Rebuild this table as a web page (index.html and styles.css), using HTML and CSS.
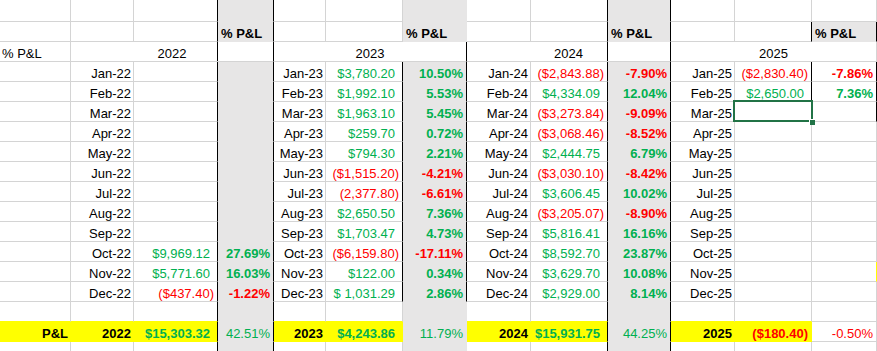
FILE: index.html
```html
<!DOCTYPE html>
<html>
<head>
<meta charset="utf-8">
<link rel="stylesheet" href="styles.css">
</head>
<body>
<div class="sheet">
  <!-- row 1 -->
  <div class="c"></div><div class="c"></div><div class="c k"></div><div class="c g k"></div>
  <div class="c"></div><div class="c"></div><div class="c g"></div>
  <div class="c"></div><div class="c k"></div><div class="c g k"></div>
  <div class="c"></div><div class="c"></div><div class="c"></div>
  <!-- row 2 -->
  <div class="c"></div><div class="c"></div><div class="c k"></div><div class="c g k l b">% P&amp;L</div>
  <div class="c"></div><div class="c"></div><div class="c g l b">% P&amp;L</div>
  <div class="c"></div><div class="c k"></div><div class="c g k l b">% P&amp;L</div>
  <div class="c"></div><div class="c k"></div><div class="c g k l b">% P&amp;L</div>
  <!-- row 3 -->
  <div class="c l">% P&amp;L</div>
  <div class="c s3 ctr k split146">2022</div>
  <div class="c s3 ctr k">2023</div>
  <div class="c s3 ctr k split140">2024</div>
  <div class="c s3 ctr">2025</div>
  <!-- Jan -->
  <div class="c"></div><div class="c mo">Jan-22</div><div class="c k"></div><div class="c g k"></div>
  <div class="c mo">Jan-23</div><div class="c k pos">$3,780.20</div><div class="c g k up">10.50%</div>
  <div class="c mo">Jan-24</div><div class="c k neg">($2,843.88)</div><div class="c g k dn">-7.90%</div>
  <div class="c mo">Jan-25</div><div class="c k neg">($2,830.40)</div><div class="c k dn">-7.86%</div>
  <!-- Feb -->
  <div class="c"></div><div class="c mo">Feb-22</div><div class="c k"></div><div class="c g k"></div>
  <div class="c mo">Feb-23</div><div class="c k pos">$1,992.10</div><div class="c g k up">5.53%</div>
  <div class="c mo">Feb-24</div><div class="c k pos">$4,334.09</div><div class="c g k up">12.04%</div>
  <div class="c mo">Feb-25</div><div class="c k pos">$2,650.00</div><div class="c k up">7.36%</div>
  <!-- Mar -->
  <div class="c"></div><div class="c mo">Mar-22</div><div class="c k"></div><div class="c g k"></div>
  <div class="c mo">Mar-23</div><div class="c k pos">$1,963.10</div><div class="c g k up">5.45%</div>
  <div class="c mo">Mar-24</div><div class="c k neg">($3,273.84)</div><div class="c g k dn">-9.09%</div>
  <div class="c mo">Mar-25</div><div class="c k sel"></div><div class="c k"></div>
  <!-- Apr -->
  <div class="c"></div><div class="c mo">Apr-22</div><div class="c k"></div><div class="c g k"></div>
  <div class="c mo">Apr-23</div><div class="c k pos">$259.70</div><div class="c g k up">0.72%</div>
  <div class="c mo">Apr-24</div><div class="c k neg">($3,068.46)</div><div class="c g k dn">-8.52%</div>
  <div class="c mo">Apr-25</div><div class="c"></div><div class="c"></div>
  <!-- May -->
  <div class="c"></div><div class="c mo">May-22</div><div class="c k"></div><div class="c g k"></div>
  <div class="c mo">May-23</div><div class="c k pos">$794.30</div><div class="c g k up">2.21%</div>
  <div class="c mo">May-24</div><div class="c k pos">$2,444.75</div><div class="c g k up">6.79%</div>
  <div class="c mo">May-25</div><div class="c"></div><div class="c"></div>
  <!-- Jun -->
  <div class="c"></div><div class="c mo">Jun-22</div><div class="c k"></div><div class="c g k"></div>
  <div class="c mo">Jun-23</div><div class="c k neg">($1,515.20)</div><div class="c g k dn">-4.21%</div>
  <div class="c mo">Jun-24</div><div class="c k neg">($3,030.10)</div><div class="c g k dn">-8.42%</div>
  <div class="c mo">Jun-25</div><div class="c"></div><div class="c"></div>
  <!-- Jul -->
  <div class="c"></div><div class="c mo">Jul-22</div><div class="c k"></div><div class="c g k"></div>
  <div class="c mo">Jul-23</div><div class="c k neg">(2,377.80)</div><div class="c g k dn">-6.61%</div>
  <div class="c mo">Jul-24</div><div class="c k pos">$3,606.45</div><div class="c g k up">10.02%</div>
  <div class="c mo">Jul-25</div><div class="c"></div><div class="c"></div>
  <!-- Aug -->
  <div class="c"></div><div class="c mo">Aug-22</div><div class="c k"></div><div class="c g k"></div>
  <div class="c mo">Aug-23</div><div class="c k pos">$2,650.50</div><div class="c g k up">7.36%</div>
  <div class="c mo">Aug-24</div><div class="c k neg">($3,205.07)</div><div class="c g k dn">-8.90%</div>
  <div class="c mo">Aug-25</div><div class="c"></div><div class="c"></div>
  <!-- Sep -->
  <div class="c"></div><div class="c mo">Sep-22</div><div class="c k"></div><div class="c g k"></div>
  <div class="c mo">Sep-23</div><div class="c k pos">$1,703.47</div><div class="c g k up">4.73%</div>
  <div class="c mo">Sep-24</div><div class="c k pos">$5,816.41</div><div class="c g k up">16.16%</div>
  <div class="c mo">Sep-25</div><div class="c"></div><div class="c"></div>
  <!-- Oct -->
  <div class="c"></div><div class="c mo">Oct-22</div><div class="c k pos">$9,969.12</div><div class="c g k up">27.69%</div>
  <div class="c mo">Oct-23</div><div class="c k neg">($6,159.80)</div><div class="c g k dn">-17.11%</div>
  <div class="c mo">Oct-24</div><div class="c k pos">$8,592.70</div><div class="c g k up">23.87%</div>
  <div class="c mo">Oct-25</div><div class="c"></div><div class="c"></div>
  <!-- Nov -->
  <div class="c"></div><div class="c mo">Nov-22</div><div class="c k pos">$5,771.60</div><div class="c g k up">16.03%</div>
  <div class="c mo">Nov-23</div><div class="c k pos">$122.00</div><div class="c g k up">0.34%</div>
  <div class="c mo">Nov-24</div><div class="c k pos">$3,629.70</div><div class="c g k up">10.08%</div>
  <div class="c mo">Nov-25</div><div class="c"></div><div class="c yr"></div>
  <!-- Dec -->
  <div class="c"></div><div class="c mo">Dec-22</div><div class="c k neg">($437.40)</div><div class="c g k dn">-1.22%</div>
  <div class="c mo">Dec-23</div><div class="c k pos">$ 1,031.29</div><div class="c g k up">2.86%</div>
  <div class="c mo">Dec-24</div><div class="c k pos">$2,929.00</div><div class="c g k up">8.14%</div>
  <div class="c mo">Dec-25</div><div class="c"></div><div class="c"></div>
  <!-- blank -->
  <div class="c yb"></div><div class="c yb"></div><div class="c k yb"></div><div class="c g k"></div>
  <div class="c yb"></div><div class="c yb"></div><div class="c g"></div>
  <div class="c yb"></div><div class="c k yb"></div><div class="c g k"></div>
  <div class="c yb"></div><div class="c yb"></div><div class="c"></div>
  <!-- totals -->
  <div class="c y b">P&amp;L</div><div class="c y b">2022</div><div class="c y k b pos">$15,303.32</div><div class="c g k tp">42.51%</div>
  <div class="c y b">2023</div><div class="c y b pos">$4,243.86</div><div class="c g tp">11.79%</div>
  <div class="c y b">2024</div><div class="c y k b pos">$15,931.75</div><div class="c g k tp">44.25%</div>
  <div class="c y b">2025</div><div class="c y b neg">($180.40)</div><div class="c tn">-0.50%</div>
  <!-- last -->
  <div class="c"></div><div class="c"></div><div class="c k"></div><div class="c g k"></div>
  <div class="c"></div><div class="c"></div><div class="c g"></div>
  <div class="c"></div><div class="c k"></div><div class="c g k"></div>
  <div class="c"></div><div class="c"></div><div class="c"></div>
</div>
</body>
</html>
```
FILE: styles.css
```css
html, body {
  margin: 0;
  padding: 0;
  background: #ffffff;
  overflow: hidden;
}

.sheet {
  display: grid;
  grid-template-columns: 71px 63px 84px 56px 52px 77px 64px 64px 77px 63px 64px 77px 65px;
  grid-template-rows: 22px repeat(17, 20px);
  font-family: "Liberation Sans", Arial, sans-serif;
  font-size: 13px;
  color: #000000;
}

.c {
  box-sizing: border-box;
  border-right: 1px solid #d4d4d4;
  border-bottom: 1px solid #d4d4d4;
  display: flex;
  align-items: flex-end;
  justify-content: flex-end;
  padding: 0 2px;
  line-height: 15px;
  white-space: nowrap;
  overflow: hidden;
}

.l { justify-content: flex-start; padding-left: 2px; }
.ctr { justify-content: center; }
.b { font-weight: bold; }
.s3 { grid-column: span 3; }

.g {
  background: #e7e6e6;
  border-right-color: #e7e6e6;
  border-bottom-color: #e7e6e6;
}
.g.l { padding-left: 3px; }

.y {
  background: #ffff00;
  border-right-color: #ffff00;
  border-bottom-color: #ffff00;
}

.yb { border-bottom-color: #ffff00; }
.yr { border-right-color: #ffff00; }

.k { border-right-color: #000000; }

.split146 {
  background: linear-gradient(to right, transparent 146px, #000000 146px, #000000 147px, transparent 147px);
}
.split140 {
  background: linear-gradient(to right, transparent 140px, #000000 140px, #000000 141px, transparent 141px);
}

.mo { padding-right: 2px; }

.pos { color: #00b050; padding-right: 7px; }
.neg { color: #ff0000; padding-right: 3px; }

.up { color: #00b050; font-weight: bold; padding-right: 3px; }
.dn { color: #ff0000; font-weight: bold; padding-right: 3px; }
.tp { color: #00b050; padding-right: 3px; }
.tn { color: #ff0000; padding-right: 3px; }

.sel {
  position: relative;
  overflow: visible;
  z-index: 2;
}
.sel::after {
  content: "";
  position: absolute;
  left: -2px;
  top: -2px;
  right: -2px;
  bottom: -1px;
  border: 2px solid #217346;
}
.sel::before {
  content: "";
  position: absolute;
  right: -4px;
  bottom: -4px;
  width: 5px;
  height: 5px;
  background: #217346;
  border-top: 1px solid #ffffff;
  border-left: 1px solid #ffffff;
  z-index: 3;
}
```
